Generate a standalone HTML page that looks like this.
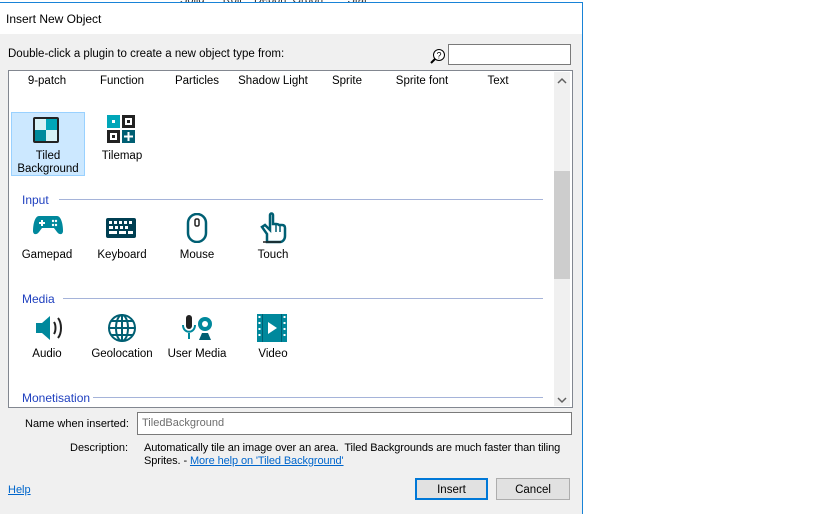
<!DOCTYPE html>
<html><head><style>
*{margin:0;padding:0;box-sizing:border-box}
body{width:819px;height:512px;background:#fff;position:relative;overflow:hidden;font-family:"Liberation Sans",sans-serif;font-size:11.5px;color:#000}
.a{position:absolute;white-space:nowrap}
.dlg{position:absolute;left:0;top:2px;width:583px;height:512px;background:#f0f0f0;border-top:1px solid #1883d7;border-right:1px solid #1883d7}
.title{position:absolute;left:0;top:0;width:582px;height:31px;background:#fff}
.list{position:absolute;left:8px;top:67px;width:565px;height:338px;background:#fff;border:1px solid #828790}
.lbl{position:absolute;text-align:center;width:80px}
.sec{position:absolute;color:#1e3fbf;font-size:12px}
.line{position:absolute;height:1px;background:#a5b3d9}
.ic{position:absolute}
</style></head><body>
<div class="a" style="left:180px;top:-6px;color:#333;font-size:11px">Solid &nbsp; &nbsp;&nbsp; Roll &nbsp;&nbsp; Debon &nbsp;Grbon &nbsp;&nbsp;&nbsp;&nbsp;&nbsp;&nbsp; Stat</div>
<div class="dlg">
<div class="title"></div>
<div class="a" style="left:6px;top:9px;font-size:12px">Insert New Object</div>
<div class="a" style="left:8px;top:45px">Double-click a plugin to create a new object type from:</div>
<svg class="ic" style="left:430px;top:45px" width="16" height="16"><circle cx="9" cy="7" r="5.5" fill="#fff" stroke="#000"/><text x="6.5" y="10.5" font-size="9" font-family="Liberation Sans">?</text><line x1="5" y1="11" x2="1" y2="15" stroke="#000" stroke-width="2"/></svg>
<div class="a" style="left:448px;top:41px;width:123px;height:21px;background:#fff;border:1px solid #7a7a7a"></div>
<div class="list">
 <div class="lbl" style="left:-2px;top:4px">9-patch</div>
 <div class="lbl" style="left:73px;top:4px">Function</div>
 <div class="lbl" style="left:148px;top:4px">Particles</div>
 <div class="lbl" style="left:224px;top:4px">Shadow Light</div>
 <div class="lbl" style="left:298px;top:4px">Sprite</div>
 <div class="lbl" style="left:373px;top:4px">Sprite font</div>
 <div class="lbl" style="left:449px;top:4px">Text</div>
 <div class="a" style="left:2px;top:41px;width:74px;height:64px;background:#cce8ff;border:1px solid #99d1ff"></div>
 <svg class="ic" style="left:23px;top:45px" width="28" height="28"><rect x="1" y="1" width="26" height="26" rx="2" fill="#222"/><rect x="3" y="3" width="11" height="11" fill="#d7f2f6"/><rect x="14" y="3" width="11" height="11" fill="#00a6b8"/><rect x="3" y="14" width="11" height="11" fill="#008a9c"/><rect x="14" y="14" width="11" height="11" fill="#d7f2f6"/></svg>
 <div class="lbl" style="left:-1px;top:79px;line-height:13px">Tiled<br>Background</div>
 <svg class="ic" style="left:98px;top:44px" width="30" height="30"><rect x="0" y="0" width="13" height="13" fill="#00a6b8"/><rect x="5" y="5" width="3" height="3" fill="#fff"/><rect x="15" y="0" width="13" height="13" fill="#222"/><rect x="18" y="3" width="7" height="7" fill="#fff"/><rect x="20" y="5" width="3" height="3" fill="#222"/><rect x="0" y="15" width="13" height="13" fill="#222"/><rect x="3" y="18" width="7" height="7" fill="#fff"/><rect x="5" y="20" width="3" height="3" fill="#222"/><rect x="15" y="15" width="13" height="13" fill="#005f73"/><path d="M21.5 17v9M17 21.5h9" stroke="#fff" stroke-width="2"/></svg>
 <div class="lbl" style="left:73px;top:79px">Tilemap</div>

 <div class="sec" style="left:13px;top:122px">Input</div>
 <div class="line" style="left:50px;top:128px;width:484px"></div>
 <svg class="ic" style="left:24px;top:143px" width="30" height="22"><path d="M6 2h18c4 0 6 8 6 15 0 4-4 4-6 1l-3-4H9l-3 4c-2 3-6 3-6-1C0 10 2 2 6 2z" fill="#00889c"/><path d="M6 9h6M9 6v6" stroke="#fff" stroke-width="2"/><circle cx="20" cy="7" r="1.2" fill="#fff"/><circle cx="23" cy="7" r="1.2" fill="#fff"/><circle cx="20" cy="11" r="1.2" fill="#fff"/><circle cx="23" cy="11" r="1.2" fill="#fff"/></svg>
 <div class="lbl" style="left:-2px;top:178px">Gamepad</div>
 <svg class="ic" style="left:97px;top:147px" width="30" height="20"><rect x="0" y="0" width="30" height="20" rx="2" fill="#003f52"/><g fill="#fff"><rect x="3" y="3" width="3" height="3"/><rect x="8" y="3" width="3" height="3"/><rect x="13" y="3" width="3" height="3"/><rect x="18" y="3" width="3" height="3"/><rect x="23" y="3" width="3" height="3"/><rect x="3" y="8" width="4" height="3"/><rect x="9" y="8" width="3" height="3"/><rect x="14" y="8" width="3" height="3"/><rect x="19" y="8" width="3" height="3"/><rect x="3" y="13" width="8" height="3"/><rect x="13" y="13" width="7" height="3"/><rect x="22" y="13" width="5" height="3"/></g></svg>
 <div class="lbl" style="left:73px;top:178px">Keyboard</div>
 <svg class="ic" style="left:177px;top:142px" width="22" height="30"><rect x="2" y="1" width="18" height="28" rx="9" fill="#fff" stroke="#005f73" stroke-width="2.5"/><rect x="9" y="6" width="4" height="7" rx="1.5" fill="#fff" stroke="#222" stroke-width="1.5"/></svg>
 <div class="lbl" style="left:148px;top:178px">Mouse</div>
 <svg class="ic" style="left:250px;top:141px" width="28" height="32"><path d="M8 30V22L3 15l3-2 5 5V3c0-2 3-2 3 0v9h3c1 0 2 0 3 1h3c2 0 3 1 3 3v8c0 3-2 6-5 6z" fill="#fff" stroke="#005f73" stroke-width="2.5"/><path d="M4 30h18" stroke="#222" stroke-width="1.5"/><path d="M17 13v7M21 14v6" stroke="#005f73" stroke-width="1.5"/></svg>
 <div class="lbl" style="left:224px;top:178px">Touch</div>

 <div class="sec" style="left:13px;top:221px">Media</div>
 <div class="line" style="left:54px;top:227px;width:480px"></div>
 <svg class="ic" style="left:25px;top:243px" width="30" height="28"><path d="M2 9h6l8-7v24l-8-7H2z" fill="#00889c"/><path d="M20 8c2 3 2 9 0 12M24 4c4 5 4 15 0 20" fill="none" stroke="#222" stroke-width="2"/></svg>
 <div class="lbl" style="left:-2px;top:277px">Audio</div>
 <svg class="ic" style="left:98px;top:242px" width="30" height="30"><g fill="none" stroke="#005f73" stroke-width="2"><circle cx="15" cy="15" r="13"/><ellipse cx="15" cy="15" rx="6" ry="13"/><path d="M15 2v26M2 15h26M4 8h22M4 22h22"/></g></svg>
 <div class="lbl" style="left:73px;top:277px">Geolocation</div>
 <svg class="ic" style="left:172px;top:243px" width="34" height="28"><rect x="5" y="1" width="6" height="14" rx="3" fill="#222"/><path d="M2 11c0 9 12 9 12 0M8 19v6" fill="none" stroke="#00889c" stroke-width="2"/><circle cx="24" cy="10" r="7" fill="#00889c"/><circle cx="24" cy="10" r="3" fill="#fff"/><path d="M18 26l3-7h6l3 7z" fill="#005f73"/></svg>
 <div class="lbl" style="left:148px;top:277px">User Media</div>
 <svg class="ic" style="left:248px;top:243px" width="30" height="28"><rect width="30" height="28" fill="#00889c"/><g fill="#fff"><rect x="1.5" y="2" width="2" height="2"/><rect x="1.5" y="8" width="2" height="2"/><rect x="1.5" y="14" width="2" height="2"/><rect x="1.5" y="20" width="2" height="2"/><rect x="26.5" y="2" width="2" height="2"/><rect x="26.5" y="8" width="2" height="2"/><rect x="26.5" y="14" width="2" height="2"/><rect x="26.5" y="20" width="2" height="2"/><path d="M11 8l9 6-9 6z"/></g><rect x="5" y="0" width="1" height="28" fill="#005f73"/><rect x="24" y="0" width="1" height="28" fill="#005f73"/></svg>
 <div class="lbl" style="left:224px;top:277px">Video</div>

 <div class="sec" style="left:13px;top:320px">Monetisation</div>
 <div class="line" style="left:84px;top:326px;width:450px"></div>

 <div class="a" style="left:545px;top:1px;width:16px;height:334px;background:#f0f0f0"></div>
 <div class="a" style="left:545px;top:100px;width:16px;height:108px;background:#cdcdcd"></div>
 <svg class="ic" style="left:548px;top:6px" width="10" height="8"><path d="M1 6l4-4 4 4" fill="none" stroke="#606060" stroke-width="1.5"/></svg>
 <svg class="ic" style="left:548px;top:325px" width="10" height="8"><path d="M1 2l4 4 4-4" fill="none" stroke="#606060" stroke-width="1.5"/></svg>
</div>
<div class="a" style="left:25px;top:415px;font-size:11px">Name when inserted:</div>
<div class="a" style="left:137px;top:409px;width:435px;height:23px;background:#fff;border:1px solid #7a7a7a;color:#6d6d6d;padding:4px 0 0 4px;font-size:11px">TiledBackground</div>
<div class="a" style="left:70px;top:439px;font-size:11px">Description:</div>
<div class="a" style="left:144px;top:439px;line-height:13px;font-size:11px;letter-spacing:-0.1px">Automatically tile an image over an area.&nbsp; Tiled Backgrounds are much faster than tiling<br>Sprites. - <span style="color:#0066cc;text-decoration:underline">More help on 'Tiled Background'</span></div>
<div class="a" style="left:8px;top:481px;color:#0066cc;text-decoration:underline;font-size:11px">Help</div>
<div class="a" style="left:415px;top:475px;width:73px;height:22px;background:#e1e1e1;border:2px solid #0078d7;text-align:center;padding-top:4px">Insert</div>
<div class="a" style="left:496px;top:475px;width:74px;height:22px;background:#e1e1e1;border:1px solid #adadad;text-align:center;padding-top:5px">Cancel</div>
</div>
</body></html>
